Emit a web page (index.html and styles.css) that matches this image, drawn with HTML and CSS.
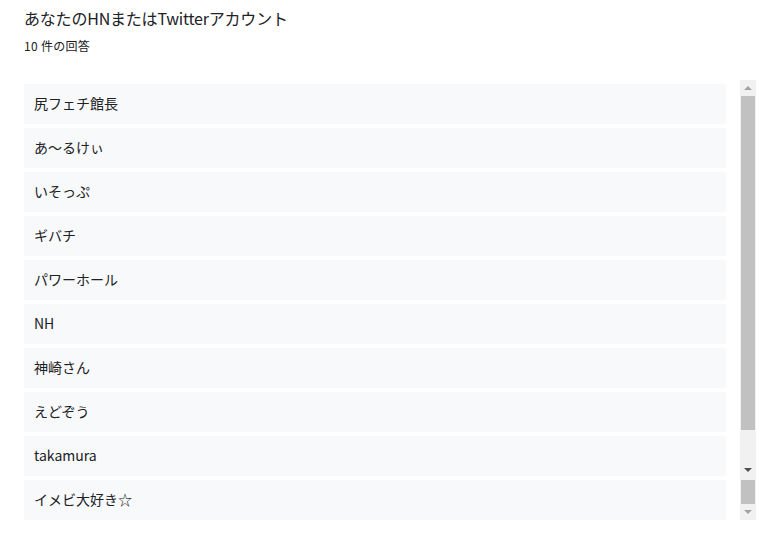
FILE: index.html
```html
<!DOCTYPE html>
<html lang="ja">
<head>
<meta charset="utf-8">
<link rel="stylesheet" href="styles.css">
</head>
<body>
<div class="page">
  <div class="title">あなたのHNまたはTwitterアカウント</div>
  <div class="count">10 件の回答</div>
  <div class="row">
    <div class="list">
      <div class="item">尻フェチ館長</div>
      <div class="item">あ～るけぃ</div>
      <div class="item">いそっぷ</div>
      <div class="item">ギバチ</div>
      <div class="item">パワーホール</div>
      <div class="item">NH</div>
      <div class="item">神崎さん</div>
      <div class="item">えどぞう</div>
      <div class="item">takamura</div>
      <div class="item">イメビ大好き☆</div>
    </div>
    <div class="scrollbar">
      <div class="arrow up light"></div>
      <div class="thumb big"></div>
      <div class="arrow down dark"></div>
      <div class="thumb small"></div>
      <div class="arrow down light"></div>
    </div>
  </div>
</div>
</body>
</html>
```
FILE: styles.css
```css
html, body {
  margin: 0;
  padding: 0;
  background: #ffffff;
}
.page {
  padding: 7px 0 0 24px;
  font-family: "Noto Sans CJK JP", "Noto Sans", sans-serif;
  color: #202124;
}
.title {
  font-size: 16px;
  line-height: 22px;
  letter-spacing: -0.2px;
}
.count {
  margin-top: 8px;
  font-size: 12px;
  line-height: 18px;
  letter-spacing: 0.3px;
}
.row {
  margin-top: 25px;
  display: flex;
  align-items: flex-start;
}
.list {
  width: 702px;
  padding-top: 4px;
  display: flex;
  flex-direction: column;
  gap: 4px;
}
.item {
  box-sizing: border-box;
  height: 40px;
  background: #f8f9fa;
  padding: 0 0 3px 10px;
  font-size: 14px;
  line-height: 20px;
  display: flex;
  align-items: center;
}
.scrollbar {
  margin-left: 14px;
  width: 16px;
  height: 440px;
  background: #f1f1f1;
  display: flex;
  flex-direction: column;
  align-items: center;
}
.arrow {
  height: 16px;
  width: 16px;
  display: flex;
  align-items: center;
  justify-content: center;
  flex: none;
}
.arrow::before {
  content: "";
  width: 0;
  height: 0;
  border-left: 4px solid transparent;
  border-right: 4px solid transparent;
}
.arrow.up::before { border-bottom: 4px solid #a3a3a3; }
.arrow.down.dark::before { border-top: 4px solid #505050; }
.arrow.down.light::before { border-top: 4px solid #a3a3a3; }
.thumb {
  width: 14px;
  background: #c1c1c1;
  flex: none;
}
.thumb.big {
  height: 334px;
  margin-bottom: 32px;
}
.thumb.small {
  height: 24px;
  margin-top: 2px;
}
```
